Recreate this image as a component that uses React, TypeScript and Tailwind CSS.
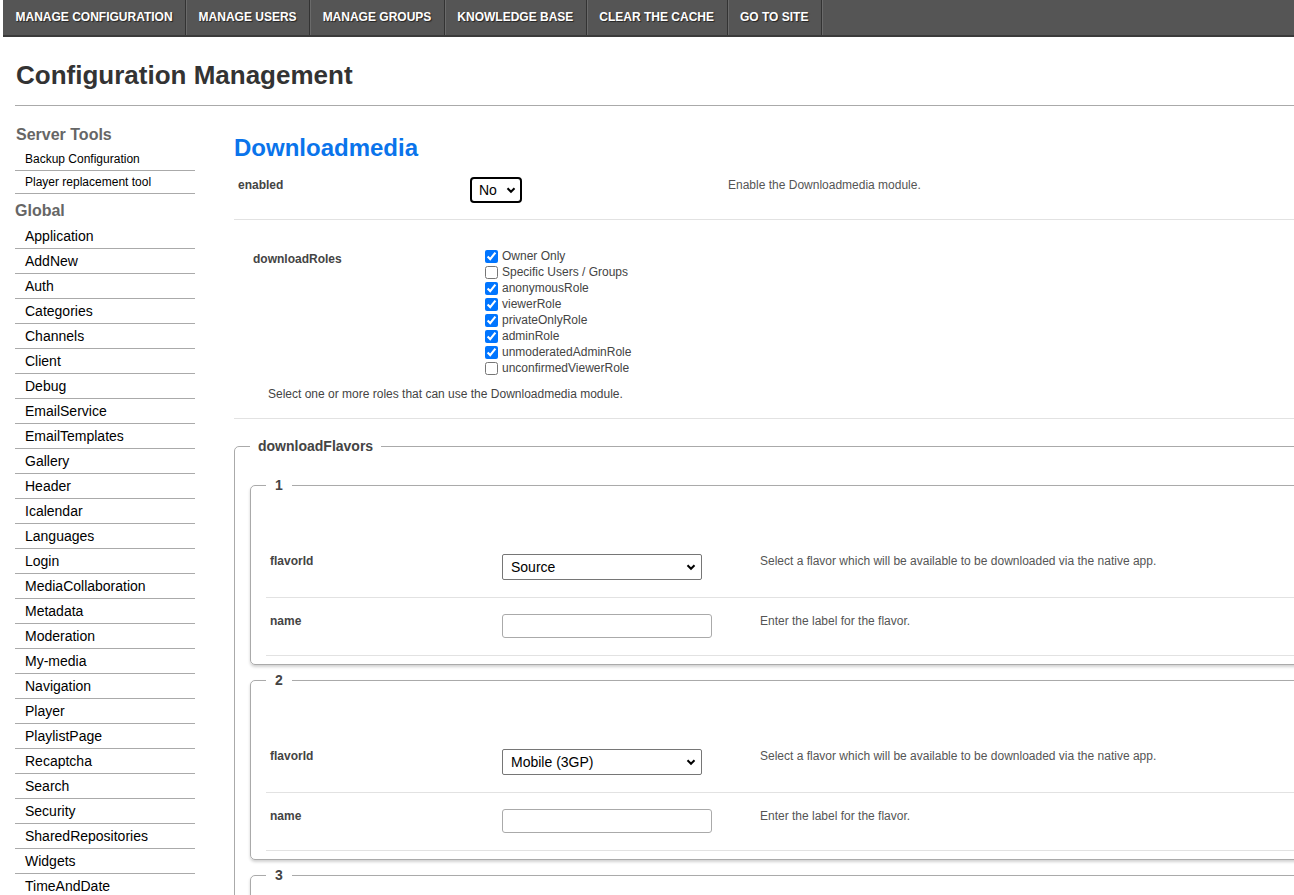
const navItems = [
  "MANAGE CONFIGURATION",
  "MANAGE USERS",
  "MANAGE GROUPS",
  "KNOWLEDGE BASE",
  "CLEAR THE CACHE",
  "GO TO SITE",
];

const globalItems = [
  "Application",
  "AddNew",
  "Auth",
  "Categories",
  "Channels",
  "Client",
  "Debug",
  "EmailService",
  "EmailTemplates",
  "Gallery",
  "Header",
  "Icalendar",
  "Languages",
  "Login",
  "MediaCollaboration",
  "Metadata",
  "Moderation",
  "My-media",
  "Navigation",
  "Player",
  "PlaylistPage",
  "Recaptcha",
  "Search",
  "Security",
  "SharedRepositories",
  "Widgets",
  "TimeAndDate",
];

const roles = [
  { name: "Owner Only", checked: true },
  { name: "Specific Users / Groups", checked: false },
  { name: "anonymousRole", checked: true },
  { name: "viewerRole", checked: true },
  { name: "privateOnlyRole", checked: true },
  { name: "adminRole", checked: true },
  { name: "unmoderatedAdminRole", checked: true },
  { name: "unconfirmedViewerRole", checked: false },
];

function Chevron() {
  return (
    <svg
      viewBox="0 0 10 10"
      className="pointer-events-none absolute right-[6px] top-1/2 h-[10px] w-[10px] -translate-y-1/2"
      fill="none"
      stroke="#000"
      strokeWidth="2">
      <path d="M1.5 3.2 L5 6.8 L8.5 3.2" />
    </svg>
  );
}

function FakeSelect({ value, width, strong = false }: { value: string; width: string; strong?: boolean }) {
  return (
    <div className={`relative ${width}`}>
      <select
        defaultValue={value}
        className={
          strong
            ? "h-[26px] w-full appearance-none rounded-[4px] border-2 border-black bg-white pl-[7px] text-[14px] text-black outline-none"
            : "h-[26px] w-full appearance-none rounded-[2px] border border-[#767676] bg-white pl-[8px] text-[14px] text-black outline-none"
        }>
        <option>{value}</option>
      </select>
      <Chevron />
    </div>
  );
}

function FlavorFieldset({ index, flavor }: { index: number; flavor: string }) {
  return (
    <fieldset className="mb-[5px] rounded-[5px] border border-[#aaa] px-[15px] pb-[8px] shadow-[0_2px_3px_rgba(0,0,0,0.18)]">
      <legend className="px-[9px] text-[14px] font-bold text-[#444]">{index}</legend>
      <div className="h-[56px]" />
      <div className="flex border-b border-[#e2e2e2] pb-[17px] pl-[4px]">
        <div className="w-[232px] text-[12px] font-bold text-[#444]">flavorId</div>
        <div className="w-[258px] pt-[2px]">
          <FakeSelect value={flavor} width="w-[200px]" />
        </div>
        <div className="text-[12px] text-[#555]">
          Select a flavor which will be available to be downloaded via the native app.
        </div>
      </div>
      <div className="flex border-b border-[#e2e2e2] pt-[16px] pb-[17px] pl-[4px]">
        <div className="-mt-[2px] w-[232px] text-[12px] font-bold text-[#444]">name</div>
        <div className="w-[258px]">
          <input
            type="text"
            className="block h-[24px] w-[210px] rounded-[3px] border border-[#aaa] bg-white outline-none"
          />
        </div>
        <div className="-mt-[2px] text-[12px] text-[#555]">Enter the label for the flavor.</div>
      </div>
    </fieldset>
  );
}

export default function App() {
  return (
    <div
      className="h-[895px] w-full overflow-hidden bg-white"
      style={{ fontFamily: '"Liberation Sans", Arial, sans-serif' }}>
      <div className="w-[1330px] pl-[3px]">
        <nav className="flex h-[37px] items-stretch border-b-2 border-[#3a3a3a] bg-[#555]">
          {navItems.map((item) => (
            <a
              key={item}
              className="flex items-center border-r border-[#333] px-[12.5px] pb-[2px] text-[12px] font-bold text-white shadow-[1px_0_0_#6a6a6a] [text-shadow:1px_1px_1px_rgba(0,0,0,0.6)]">
              {item}
            </a>
          ))}
        </nav>
      </div>

      <div className="w-[1330px] pl-[15px]">
        <h1 className="pt-[21px] pb-[13px] pl-[1px] text-[26px] font-bold leading-[34px] text-[#333]">
          Configuration Management
        </h1>
        <div className="border-t border-[#aaa]" />

        <div className="flex">
          <aside className="w-[180px] shrink-0 pt-[19px]">
            <h3 className="pl-[1px] text-[16px] font-bold leading-[20px] text-[#666]">Server Tools</h3>
            <ul className="mt-[3px]">
              {["Backup Configuration", "Player replacement tool"].map((t) => (
                <li
                  key={t}
                  className="border-b border-[#aaa] pl-[10px] text-[12px] leading-[22px] text-black">
                  {t}
                </li>
              ))}
            </ul>
            <h3 className="pt-[7px] text-[16px] font-bold leading-[20px] text-[#666]">Global</h3>
            <ul className="mt-[3px]">
              {globalItems.map((t) => (
                <li
                  key={t}
                  className="border-b border-[#aaa] pl-[10px] text-[14px] leading-[24px] text-black">
                  {t}
                </li>
              ))}
            </ul>
          </aside>

          <main className="ml-[39px] flex-1 pt-[27px]">
            <h2 className="text-[24px] font-bold leading-[30px] text-[#0a74eb]">Downloadmedia</h2>

            <div className="flex border-b border-[#e2e2e2] pb-[16px] pt-[6px] pl-[4px]">
              <div className="w-[232px] pt-[7px] text-[12px] font-bold text-[#444]">enabled</div>
              <div className="w-[258px] pt-[8px]">
                <FakeSelect value="No" width="w-[52px]" strong />
              </div>
              <div className="pt-[7px] text-[12px] text-[#555]">Enable the Downloadmedia module.</div>
            </div>

            <div className="border-b border-[#e2e2e2] pb-[15px] pt-[28px] pl-[19px]">
              <div className="flex">
                <div className="w-[232px] pt-[2px] text-[12px] font-bold text-[#444]">downloadRoles</div>
                <div className="flex flex-col">
                  {roles.map((r) => (
                    <label key={r.name} className="flex h-[16px] items-center text-[12px] text-[#444]">
                      <input
                        type="checkbox"
                        defaultChecked={r.checked}
                        className="m-0 mr-[4px] h-[13px] w-[13px] accent-[#0075ff]"
                      />
                      {r.name}
                    </label>
                  ))}
                </div>
              </div>
              <div className="pl-[15px] pt-[9px] text-[12px] text-[#444]">
                Select one or more roles that can use the Downloadmedia module.
              </div>
            </div>

            <fieldset className="mt-[17px] rounded-[5px] border border-[#aaa] px-[15px] pt-[18px]">
              <legend className="px-[8px] text-[14px] font-bold text-[#444]">downloadFlavors</legend>
              <FlavorFieldset index={1} flavor="Source" />
              <FlavorFieldset index={2} flavor="Mobile (3GP)" />
              <FlavorFieldset index={3} flavor="Mobile (MP4)" />
            </fieldset>
          </main>
        </div>
      </div>
    </div>
  );
}
